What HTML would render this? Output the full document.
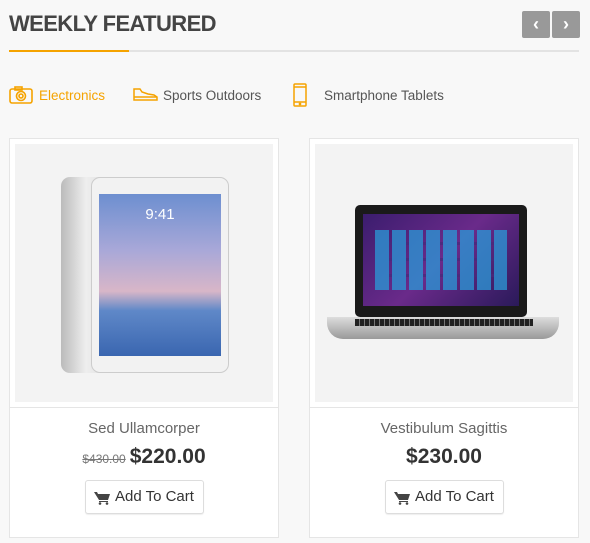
<!DOCTYPE html>
<html><head><meta charset="utf-8"><style>
*{margin:0;padding:0;box-sizing:border-box}
body{width:590px;height:543px;background:#f8f8f8;font-family:"Liberation Sans",sans-serif;position:relative;overflow:hidden}
.title{position:absolute;left:9px;top:11px;font-size:22px;font-weight:bold;color:#444;letter-spacing:-0.6px}
.line{position:absolute;left:9px;top:50px;width:570px;height:2px;background:#e3e3e3}
.line i{position:absolute;left:0;top:0;width:120px;height:2px;background:#f5a300}
.nav{position:absolute;top:11px;width:28px;height:27px;background:#999;border-radius:2px;color:#fff;font-size:18px;text-align:center;line-height:26px;font-weight:bold}
.tab{position:absolute;top:88px;font-size:13.5px;color:#555}
.card{position:absolute;top:138px;width:270px;height:400px;background:#fff;border:1px solid #e5e5e5}
.img{position:absolute;left:5px;top:5px;width:258px;height:258px;background:#f3f3f3}
.sep{position:absolute;left:0;right:0;top:268px;height:1px;background:#e5e5e5}
.name{position:absolute;top:281px;width:100%;text-align:center;font-size:15px;color:#666}
.price{position:absolute;top:306px;width:100%;text-align:center;font-size:21px;font-weight:bold;color:#333}
.price s{font-size:12px;color:#777;font-weight:normal;margin-right:4px}
.btn{position:absolute;top:341px;width:119px;height:34px;border:1px solid #ddd;border-radius:3px;background:#fff;font-size:15px;color:#333;line-height:32px;padding-left:29px;box-shadow:0 1px 1px #eee}
.btn svg{position:absolute;left:8px;top:10px}
</style></head><body>
<div class="title">WEEKLY FEATURED</div>
<div class="line"><i></i></div>
<div class="nav" style="left:522px">‹</div>
<div class="nav" style="left:552px">›</div>
<svg style="position:absolute;left:9px;top:86px" width="24" height="18" viewBox="0 0 24 18" fill="none" stroke="#f5a300" stroke-width="1.6"><rect x="1" y="3" width="22" height="14" rx="2"/><rect x="6" y="1" width="7" height="3"/><circle cx="12" cy="10" r="4.5"/><circle cx="12" cy="10" r="2"/></svg>
<div class="tab" style="left:39px;color:#f5a300">Electronics</div>
<svg style="position:absolute;left:133px;top:87px" width="25" height="14" viewBox="0 0 25 14" fill="none" stroke="#f5a300" stroke-width="1.5"><path d="M1 2h6l2 3 6 2 6 1 3 2v3H1z"/><path d="M1 10h23"/></svg>
<div class="tab" style="left:163px">Sports Outdoors</div>
<svg style="position:absolute;left:293px;top:83px" width="14" height="24" viewBox="0 0 14 24" fill="none" stroke="#f5a300" stroke-width="1.5"><rect x="1" y="1" width="12" height="22" rx="1"/><path d="M1 4h12M1 19h12"/><circle cx="7" cy="21" r=".6"/></svg>
<div class="tab" style="left:324px">Smartphone Tablets</div>

<div class="card" style="left:9px">
 <div class="img">
  <div style="position:absolute;left:46px;top:33px;width:50px;height:196px;background:linear-gradient(90deg,#bbb,#eee,#ddd);border-radius:9px"></div>
  <div style="position:absolute;left:76px;top:33px;width:138px;height:196px;background:#f2f2f2;border:1px solid #ccc;border-radius:9px"></div>
  <div style="position:absolute;left:84px;top:50px;width:122px;height:162px;background:linear-gradient(180deg,#6d8fd0 0%,#a9a8d8 35%,#d8b6c8 60%,#5f88c8 72%,#3a66b0 100%)"></div>
  <div style="position:absolute;left:84px;top:62px;width:122px;text-align:center;color:#fff;font-size:15px">9:41</div>
 </div>
 <div class="sep"></div>
 <div class="name">Sed Ullamcorper</div>
 <div class="price"><s>$430.00</s>$220.00</div>
 <div class="btn" style="left:75px"><svg width="16" height="14" viewBox="0 0 16 14" fill="#444"><path d="M0 1h3l1 2h12l-2 6H5zM5 10h9v1H5z"/><circle cx="6" cy="12.5" r="1.3"/><circle cx="13" cy="12.5" r="1.3"/></svg>Add To Cart</div>
</div>

<div class="card" style="left:309px">
 <div class="img">
  <div style="position:absolute;left:40px;top:61px;width:172px;height:112px;background:#1a1a1a;border-radius:5px"></div>
  <div style="position:absolute;left:48px;top:70px;width:156px;height:92px;background:linear-gradient(135deg,#3b1d6e,#6a2a8a 50%,#2a1a5a)"></div>
  <div style="position:absolute;left:60px;top:86px;width:132px;height:60px;background:repeating-linear-gradient(90deg,#2a9ad8 0 14px,transparent 14px 17px),repeating-linear-gradient(0deg,transparent 0 13px,#4a2a7a 13px 16px);opacity:.75"></div>
  <div style="position:absolute;left:12px;top:173px;width:232px;height:22px;background:linear-gradient(180deg,#ddd,#999);border-radius:0 0 16px 16px"></div>
  <div style="position:absolute;left:40px;top:175px;width:178px;height:7px;background:repeating-linear-gradient(90deg,#222 0 4px,#777 4px 5px)"></div>
 </div>
 <div class="sep"></div>
 <div class="name">Vestibulum Sagittis</div>
 <div class="price">$230.00</div>
 <div class="btn" style="left:75px"><svg width="16" height="14" viewBox="0 0 16 14" fill="#444"><path d="M0 1h3l1 2h12l-2 6H5zM5 10h9v1H5z"/><circle cx="6" cy="12.5" r="1.3"/><circle cx="13" cy="12.5" r="1.3"/></svg>Add To Cart</div>
</div>
</body></html>
